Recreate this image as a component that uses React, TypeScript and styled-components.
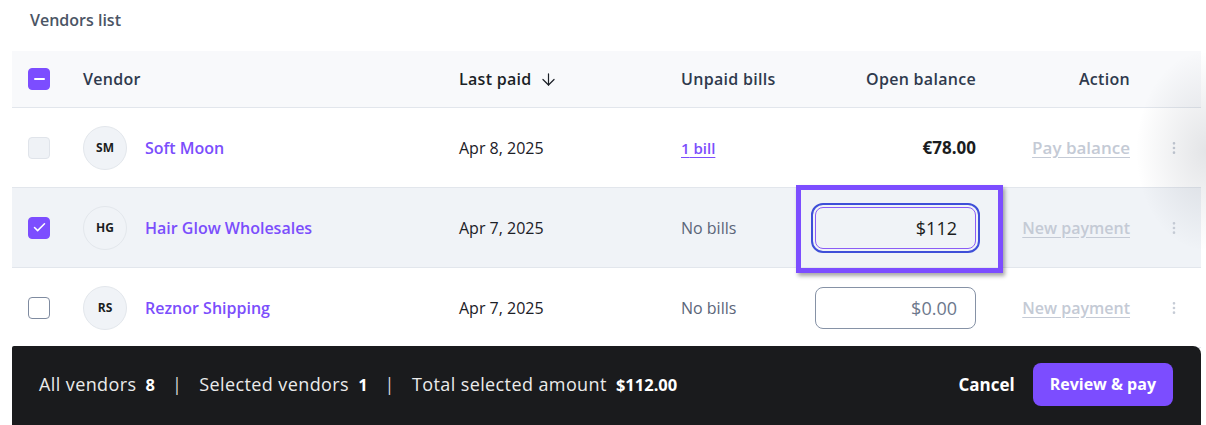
import styled, { createGlobalStyle } from "styled-components";
import { ArrowDown, Check, EllipsisVertical } from "lucide-react";

type Vendor = {
  id: string;
  initials: string;
  name: string;
  lastPaid: string;
  bills: number;
  balance?: string;
  amount?: string;
  selected?: boolean;
  focused?: boolean;
  disabled?: boolean;
};

const vendors: Vendor[] = [
  { id: "sm", initials: "SM", name: "Soft Moon", lastPaid: "Apr 8, 2025", bills: 1, balance: "€78.00", disabled: true },
  { id: "hg", initials: "HG", name: "Hair Glow Wholesales", lastPaid: "Apr 7, 2025", bills: 0, amount: "$112", selected: true, focused: true },
  { id: "rs", initials: "RS", name: "Reznor Shipping", lastPaid: "Apr 7, 2025", bills: 0, amount: "" },
];

const GlobalStyle = createGlobalStyle`
  body {
    margin: 0;
    background: #ffffff;
    font-family: "Open Sans", "Liberation Sans", sans-serif;
    overflow: hidden;
  }
`;

const App = () => {
  return (
    <Page>
      <GlobalStyle />
      <Title>Vendors list</Title>
      <Table>
        <HeaderRow>
          <CheckCell>
            <Box variant="checked">
              <Dash />
            </Box>
          </CheckCell>
          <HeadCell>Vendor</HeadCell>
          <HeadCell active>
            Last paid
            <ArrowDown size={19} strokeWidth={1.5} />
          </HeadCell>
          <HeadCell>Unpaid bills</HeadCell>
          <HeadCell align="right">Open balance</HeadCell>
          <HeadCell align="right">Action</HeadCell>
          <HeadCell />
        </HeaderRow>
        {vendors.map((v) => (
          <Row key={v.id} selected={v.selected}>
            <CheckCell>
              <Box variant={v.selected ? "checked" : v.disabled ? "disabled" : "empty"}>
                {v.selected && <Check size={15} strokeWidth={2.4} color="#fff" />}
              </Box>
            </CheckCell>
            <VendorCell>
              <Avatar>{v.initials}</Avatar>
              <VendorName>{v.name}</VendorName>
            </VendorCell>
            <Cell>{v.lastPaid}</Cell>
            <Cell>
              {v.bills > 0 ? <BillLink>{v.bills} bill</BillLink> : <Muted>No bills</Muted>}
            </Cell>
            <BalanceCell>
              {v.balance ? (
                <Balance>{v.balance}</Balance>
              ) : (
                <AmountInput
                  focused={v.focused}
                  defaultValue={v.amount}
                  placeholder="$0.00"
                />
              )}
              {v.focused && <Highlight />}
            </BalanceCell>
            <ActionCell>
              <ActionLink wide={!!v.balance}>{v.balance ? "Pay balance" : "New payment"}</ActionLink>
            </ActionCell>
            <MenuCell>
              <EllipsisVertical size={16} color="#c6ccd6" />
            </MenuCell>
          </Row>
        ))}
        <EdgeShadow />
      </Table>
      <Footer>
        <Summary>
          <Stat>
            All vendors <strong>8</strong>
          </Stat>
          <Sep>|</Sep>
          <Stat>
            Selected vendors <strong>1</strong>
          </Stat>
          <Sep>|</Sep>
          <Stat>
            Total selected amount <strong>$112.00</strong>
          </Stat>
        </Summary>
        <Buttons>
          <CancelButton>Cancel</CancelButton>
          <PayButton>Review &amp; pay</PayButton>
        </Buttons>
      </Footer>
    </Page>
  );
};

const Page = styled.div`
  padding: 0 5px 0 12px;
`;

const Title = styled.div`
  padding: 10px 18px;
  margin-bottom: 11px;
  font-size: 16px;
  line-height: 20px;
  font-weight: 600;
  color: #4b5565;
`;

const Table = styled.div`
  position: relative;
`;

const columns = "71px 376px 222px 135px 160px 154px 1fr";

const HeaderRow = styled.div`
  display: grid;
  grid-template-columns: ${columns};
  height: 56px;
  align-items: center;
  background: #f8f9fb;
  border-bottom: 1px solid #e2e6ec;
`;

const HeadCell = styled.div<{ active?: boolean; align?: "right" }>`
  display: flex;
  align-items: center;
  justify-content: ${({ align }) => (align === "right" ? "flex-end" : "flex-start")};
  gap: 7px;
  font-size: 16px;
  letter-spacing: 0.3px;
  font-weight: 600;
  color: ${({ active }) => (active ? "#1b1f26" : "#2f3a4d")};

  svg {
    color: #1b1f26;
  }
`;

const Row = styled.div<{ selected?: boolean }>`
  display: grid;
  grid-template-columns: ${columns};
  height: 79px;
  align-items: center;
  background: ${({ selected }) => (selected ? "#f0f3f7" : "#ffffff")};
  border-bottom: 1px solid #e2e6ec;
`;

const CheckCell = styled.div`
  display: flex;
  padding-left: 16px;
`;

const Box = styled.div<{ variant: "checked" | "empty" | "disabled" }>`
  box-sizing: border-box;
  width: 22px;
  height: 22px;
  border-radius: 4px;
  display: flex;
  align-items: center;
  justify-content: center;
  background: ${({ variant }) =>
    variant === "checked" ? "#7c4dff" : variant === "disabled" ? "#eff2f6" : "#ffffff"};
  border: 1.5px solid
    ${({ variant }) =>
      variant === "checked" ? "#7c4dff" : variant === "disabled" ? "#e0e4ea" : "#7f8ba0"};
`;

const Dash = styled.span`
  width: 11px;
  height: 2px;
  border-radius: 1px;
  background: #ffffff;
`;

const Cell = styled.div`
  font-size: 16px;
  color: #1c2027;
`;

const VendorCell = styled.div`
  display: flex;
  align-items: center;
  gap: 18px;
`;

const Avatar = styled.div`
  box-sizing: border-box;
  width: 44px;
  height: 44px;
  border-radius: 50%;
  background: #f0f3f7;
  border: 1px solid #e3e7ec;
  display: flex;
  align-items: center;
  justify-content: center;
  font-size: 12px;
  font-weight: 700;
  color: #1a1c20;
`;

const VendorName = styled.span`
  font-size: 16px;
  font-weight: 600;
  color: #7b4efc;
`;

const BillLink = styled.span`
  font-size: 15px;
  font-weight: 600;
  color: #7b4efc;
  text-decoration: underline;
  text-underline-offset: 3px;
`;

const Muted = styled.span`
  color: #5b6579;
`;

const BalanceCell = styled.div`
  position: relative;
  display: flex;
  justify-content: flex-end;
`;

const Balance = styled.span`
  font-size: 17px;
  font-weight: 700;
  color: #1a1c20;
`;

const AmountInput = styled.input<{ focused?: boolean }>`
  box-sizing: border-box;
  width: 161px;
  height: 42px;
  padding: 0 18px;
  border-radius: 8px;
  text-align: right;
  font-family: inherit;
  font-size: 18px;
  color: #1a1c20;
  background: ${({ focused }) => (focused ? "transparent" : "#ffffff")};
  border: 1px solid ${({ focused }) => (focused ? "#8b5cf6" : "#8692a6")};
  outline: ${({ focused }) => (focused ? "2px solid #3e4ed8" : "none")};
  outline-offset: 2px;

  &::placeholder {
    color: #6d788c;
  }
`;

const Highlight = styled.div`
  position: absolute;
  left: -20px;
  top: -22px;
  width: 207px;
  height: 88px;
  box-sizing: border-box;
  border: 5px solid #7c4dff;
  box-shadow: 2px 3px 4px rgba(0, 0, 0, 0.35);
  pointer-events: none;
`;

const ActionCell = styled.div`
  display: flex;
  justify-content: flex-end;
`;

const ActionLink = styled.span<{ wide?: boolean }>`
  font-size: ${({ wide }) => (wide ? "17px" : "16px")};
  font-weight: 600;
  color: #c4cad5;
  text-decoration: underline;
  text-underline-offset: 3px;
`;

const MenuCell = styled.div`
  display: flex;
  padding-left: 36px;
`;

const EdgeShadow = styled.div`
  position: absolute;
  right: -5px;
  top: 0;
  width: 70px;
  height: 200px;
  background: radial-gradient(
    ellipse 100% 50% at 100% 50%,
    rgba(30, 40, 60, 0.12),
    rgba(30, 40, 60, 0) 100%
  );
  pointer-events: none;
`;

const Footer = styled.div`
  position: relative;
  display: flex;
  align-items: center;
  justify-content: space-between;
  height: 76px;
  margin-top: -2px;
  padding: 0 28px 4px 27px;
  background: #1a1b1d;
  border-radius: 2px 8px 0 0;
`;

const Summary = styled.div`
  display: flex;
  align-items: center;
  gap: 17px;
  font-size: 18px;
  letter-spacing: 0.4px;
  color: #ebebeb;
`;

const Stat = styled.span`
  strong {
    margin-left: 4px;
    font-size: 16.5px;
    letter-spacing: 0;
    font-weight: 700;
    color: #ffffff;
  }
`;

const Sep = styled.span`
  color: #d8d8d8;
`;

const Buttons = styled.div`
  display: flex;
  align-items: center;
  gap: 18px;
`;

const CancelButton = styled.button`
  background: none;
  border: none;
  padding: 0;
  font-family: inherit;
  font-size: 17px;
  font-weight: 700;
  color: #ffffff;
`;

const PayButton = styled.button`
  height: 43px;
  padding: 0 17px;
  border: none;
  border-radius: 8px;
  background: #7c4dff;
  font-family: inherit;
  font-size: 16px;
  font-weight: 700;
  color: #ffffff;
`;

export default App;
